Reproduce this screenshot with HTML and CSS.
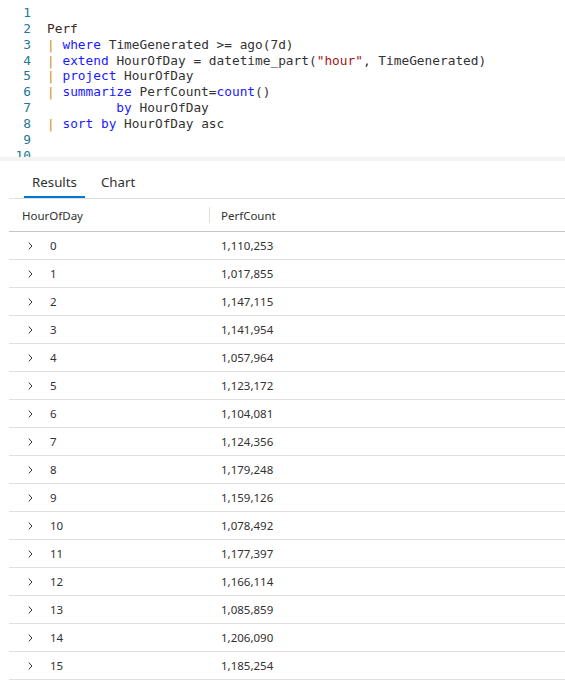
FILE: index.html
```html
<!DOCTYPE html>
<html>
<head>
<meta charset="utf-8">
<link rel="stylesheet" href="styles.css">
</head>
<body>
<div class="editor">
  <div class="line"><span class="ln">1</span><span class="code"></span></div>
  <div class="line"><span class="ln">2</span><span class="code"><span class="id">Perf</span></span></div>
  <div class="line"><span class="ln">3</span><span class="code"><span class="pipe">|</span> <span class="kw">where</span> TimeGenerated &gt;= ago(7d)</span></div>
  <div class="line"><span class="ln">4</span><span class="code"><span class="pipe">|</span> <span class="kw">extend</span> HourOfDay = datetime_part(<span class="str">"hour"</span>, TimeGenerated)</span></div>
  <div class="line"><span class="ln">5</span><span class="code"><span class="pipe">|</span> <span class="kw">project</span> HourOfDay</span></div>
  <div class="line"><span class="ln">6</span><span class="code"><span class="pipe">|</span> <span class="kw">summarize</span> PerfCount=<span class="kw">count</span>()</span></div>
  <div class="line"><span class="ln">7</span><span class="code">         <span class="kw">by</span> HourOfDay</span></div>
  <div class="line"><span class="ln">8</span><span class="code"><span class="pipe">|</span> <span class="kw">sort</span> <span class="kw">by</span> HourOfDay asc</span></div>
  <div class="line"><span class="ln">9</span><span class="code"></span></div>
  <div class="line"><span class="ln">10</span><span class="code"></span></div>
</div>
<div class="divider"></div>
<div class="results">
  <div class="tabs">
    <div class="tab active">Results</div>
    <div class="tab">Chart</div>
  </div>
  <div class="grid">
    <div class="row head">
      <div class="c1">HourOfDay</div>
      <div class="c2"><span class="sep"></span>PerfCount</div>
    </div>
    <div class="row"><div class="c1"><svg class="chev" width="5" height="8" viewBox="0 0 5 8"><path d="M0.8 0.6 L4 4 L0.8 7.4" fill="none" stroke="#323130" stroke-width="1"/></svg><span class="num">0</span></div><div class="c2">1,110,253</div></div>
    <div class="row"><div class="c1"><svg class="chev" width="5" height="8" viewBox="0 0 5 8"><path d="M0.8 0.6 L4 4 L0.8 7.4" fill="none" stroke="#323130" stroke-width="1"/></svg><span class="num">1</span></div><div class="c2">1,017,855</div></div>
    <div class="row"><div class="c1"><svg class="chev" width="5" height="8" viewBox="0 0 5 8"><path d="M0.8 0.6 L4 4 L0.8 7.4" fill="none" stroke="#323130" stroke-width="1"/></svg><span class="num">2</span></div><div class="c2">1,147,115</div></div>
    <div class="row"><div class="c1"><svg class="chev" width="5" height="8" viewBox="0 0 5 8"><path d="M0.8 0.6 L4 4 L0.8 7.4" fill="none" stroke="#323130" stroke-width="1"/></svg><span class="num">3</span></div><div class="c2">1,141,954</div></div>
    <div class="row"><div class="c1"><svg class="chev" width="5" height="8" viewBox="0 0 5 8"><path d="M0.8 0.6 L4 4 L0.8 7.4" fill="none" stroke="#323130" stroke-width="1"/></svg><span class="num">4</span></div><div class="c2">1,057,964</div></div>
    <div class="row"><div class="c1"><svg class="chev" width="5" height="8" viewBox="0 0 5 8"><path d="M0.8 0.6 L4 4 L0.8 7.4" fill="none" stroke="#323130" stroke-width="1"/></svg><span class="num">5</span></div><div class="c2">1,123,172</div></div>
    <div class="row"><div class="c1"><svg class="chev" width="5" height="8" viewBox="0 0 5 8"><path d="M0.8 0.6 L4 4 L0.8 7.4" fill="none" stroke="#323130" stroke-width="1"/></svg><span class="num">6</span></div><div class="c2">1,104,081</div></div>
    <div class="row"><div class="c1"><svg class="chev" width="5" height="8" viewBox="0 0 5 8"><path d="M0.8 0.6 L4 4 L0.8 7.4" fill="none" stroke="#323130" stroke-width="1"/></svg><span class="num">7</span></div><div class="c2">1,124,356</div></div>
    <div class="row"><div class="c1"><svg class="chev" width="5" height="8" viewBox="0 0 5 8"><path d="M0.8 0.6 L4 4 L0.8 7.4" fill="none" stroke="#323130" stroke-width="1"/></svg><span class="num">8</span></div><div class="c2">1,179,248</div></div>
    <div class="row"><div class="c1"><svg class="chev" width="5" height="8" viewBox="0 0 5 8"><path d="M0.8 0.6 L4 4 L0.8 7.4" fill="none" stroke="#323130" stroke-width="1"/></svg><span class="num">9</span></div><div class="c2">1,159,126</div></div>
    <div class="row"><div class="c1"><svg class="chev" width="5" height="8" viewBox="0 0 5 8"><path d="M0.8 0.6 L4 4 L0.8 7.4" fill="none" stroke="#323130" stroke-width="1"/></svg><span class="num">10</span></div><div class="c2">1,078,492</div></div>
    <div class="row"><div class="c1"><svg class="chev" width="5" height="8" viewBox="0 0 5 8"><path d="M0.8 0.6 L4 4 L0.8 7.4" fill="none" stroke="#323130" stroke-width="1"/></svg><span class="num">11</span></div><div class="c2">1,177,397</div></div>
    <div class="row"><div class="c1"><svg class="chev" width="5" height="8" viewBox="0 0 5 8"><path d="M0.8 0.6 L4 4 L0.8 7.4" fill="none" stroke="#323130" stroke-width="1"/></svg><span class="num">12</span></div><div class="c2">1,166,114</div></div>
    <div class="row"><div class="c1"><svg class="chev" width="5" height="8" viewBox="0 0 5 8"><path d="M0.8 0.6 L4 4 L0.8 7.4" fill="none" stroke="#323130" stroke-width="1"/></svg><span class="num">13</span></div><div class="c2">1,085,859</div></div>
    <div class="row"><div class="c1"><svg class="chev" width="5" height="8" viewBox="0 0 5 8"><path d="M0.8 0.6 L4 4 L0.8 7.4" fill="none" stroke="#323130" stroke-width="1"/></svg><span class="num">14</span></div><div class="c2">1,206,090</div></div>
    <div class="row"><div class="c1"><svg class="chev" width="5" height="8" viewBox="0 0 5 8"><path d="M0.8 0.6 L4 4 L0.8 7.4" fill="none" stroke="#323130" stroke-width="1"/></svg><span class="num">15</span></div><div class="c2">1,185,254</div></div>
  </div>
</div>
</body>
</html>
```

FILE: styles.css
```css
html, body {
  margin: 0;
  padding: 0;
  background: #ffffff;
  overflow: hidden;
}
body {
  width: 565px;
  height: 683px;
}
.editor {
  height: 157px;
  overflow: hidden;
  padding-top: 5px;
  box-sizing: border-box;
  font-family: "DejaVu Sans Mono", "Liberation Mono", monospace;
  font-size: 12.8px;
  color: #333333;
}
.line {
  display: flex;
  height: 15.85px;
  line-height: 15.85px;
  white-space: pre;
}
.ln {
  width: 31px;
  text-align: right;
  color: #237893;
  flex: none;
}
.code {
  margin-left: 16px;
}
.kw { color: #1a1aff; }
.pipe { color: #d18f20; }
.str { color: #a31515; }
.id { color: #3b2a22; }
.divider {
  height: 4px;
  background: #f3f3f3;
}
.results {
  padding-left: 9px;
  font-family: "Noto Sans", "Open Sans", sans-serif;
  color: #323130;
}
.tabs {
  display: flex;
  gap: 8px;
  padding-left: 15px;
  height: 37px;
  border-bottom: 1px solid #e1dfdd;
}
.tab {
  padding: 7px 8px 0;
  font-size: 13.3px;
  line-height: 28px;
  border-bottom: 2px solid transparent;
  color: #323130;
}
.tab.active {
  border-bottom-color: #0078d4;
}
.row {
  display: flex;
  height: 27px;
  align-items: center;
  border-bottom: 1px solid #e1dfdd;
  font-size: 11.5px;
}
.row.head {
  height: 32px;
  border-bottom-color: #c8c6c4;
}
.c1 {
  width: 200px;
  padding-left: 13px;
  box-sizing: border-box;
  display: flex;
  align-items: center;
}
.c2 {
  padding-left: 12px;
  display: flex;
  align-items: center;
  position: relative;
  height: 100%;
}
.sep {
  position: absolute;
  left: 0;
  top: 8px;
  width: 1px;
  height: 16px;
  background: #e1dfdd;
}
.chev {
  margin-left: 6px;
  flex: none;
}
.num {
  margin-left: 17px;
}
```
